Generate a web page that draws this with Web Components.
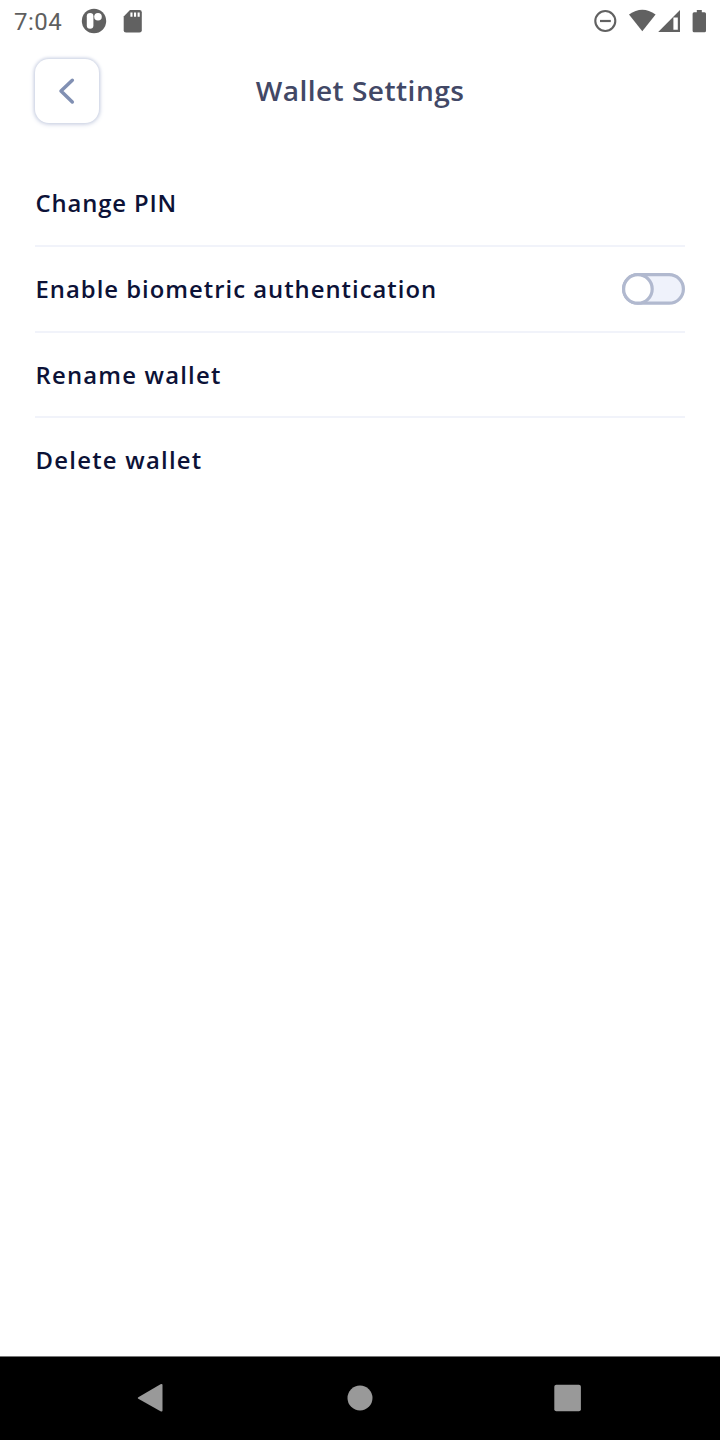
<!DOCTYPE html>
<html lang="en">
<head>
<meta charset="utf-8">
<title>Wallet Settings</title>
<style>
html, body { margin: 0; background: #fff; }
</style>
</head>
<body>
<wallet-screen>
  <status-bar slot="status">7:04</status-bar>
  <page-header slot="header">Wallet Settings</page-header>
  <setting-row style="--track:.81px">Change PIN</setting-row>
  <setting-row style="--track:.94px">Enable biometric authentication<toggle-switch slot="control"></toggle-switch></setting-row>
  <setting-row style="--track:1.13px">Rename wallet</setting-row>
  <setting-row last style="--track:1.18px">Delete wallet</setting-row>
  <nav-bar slot="nav"></nav-bar>
</wallet-screen>
<script>
const define = (name, html) => customElements.define(name, class extends HTMLElement {
  constructor() {
    super();
    this.attachShadow({ mode: 'open' }).innerHTML = html;
  }
});

define('wallet-screen', `
<style>
:host { display: flex; flex-direction: column; width: 720px; height: 1440px; background: #fff; overflow: hidden; font-family: "Open Sans", "Liberation Sans", sans-serif; }
main { flex: 1; padding: 22.3px 35px 0; }
</style>
<slot name="status"></slot><slot name="header"></slot>
<main><slot></slot></main>
<slot name="nav"></slot>`);

define('status-bar', `
<style>
:host { display: flex; height: 43px; align-items: center; color: #5f5f5f; box-sizing: border-box; padding-left: 14px; font: 400 24px/43px Roboto, sans-serif; letter-spacing: .5px; }
.time { width: 67px; white-space: nowrap; padding-top: 1px; }
.left { flex: 1; }
svg { display: block; }
</style>
<span class="time"><slot></slot></span>
<svg class="left" height="43" viewBox="81 0 510 43" preserveAspectRatio="xMinYMin" fill="#616161">
  <circle cx="94" cy="21" r="12.2"/>
  <rect x="86.8" y="13" width="6.6" height="15.8" rx="3.3" fill="#fff"/>
  <circle cx="98" cy="16.7" r="3.8" fill="#fff"/>
  <path d="M130 10h9.500q2.300 0 2.300 2.300v17.900q0 2.300-2.300 2.300h-13.500q-2.300 0-2.300-2.300v-13.700z"/>
  <path d="M130.400 12.500h2.100v4.200h-2.100zM134 12.500h2.100v4.200H134zM137.600 12.500h2.100v4.200h-2.100z" fill="#fff"/>
</svg>
<svg width="129" height="43" viewBox="591 0 129 43" fill="#616161">
  <circle cx="605.300" cy="21" r="10" fill="none" stroke="#616161" stroke-width="2.100"/>
  <path d="M600 19.900h10.800v2.200H600z"/>
  <path d="M642.300 31.300L629 14.600q13.300-9.500 26.600 0z"/>
  <path fill-rule="evenodd" d="M680 10v22h-21.800zM673.400 17.500v12.300h4.400V17.500z"/>
  <path d="M696.800 10h5v2.200h2.700q1.500 0 1.500 1.500V30.700q0 1.500-1.500 1.500h-10.400q-1.500 0-1.500-1.500v-17q0-1.500 1.500-1.500h2.700z"/>
</svg>`);

define('page-header', `
<style>
:host { display: grid; grid-template-columns: 64px 1fr 64px; align-items: center; height: 96px; padding: 0 35px; box-sizing: border-box; }
button { display: grid; place-items: center; width: 63.500px; height: 63.500px; padding: 0; border: 0; border-radius: 14px; background: #fff; box-shadow: 0 0 3px 1px #cfd5e5, 0 1px 5px 1px #dfe3ee; }
h1 { margin: 0; text-align: center; font-size: 26.500px; line-height: 34px; font-weight: 600; color: #424866; letter-spacing: .43px; white-space: nowrap; transform: scaleX(1.06); }
</style>
<button aria-label="Back"><svg width="20" height="30" viewBox="57 76 20 30" fill="none" stroke="#8190b3" stroke-width="3.500" stroke-linecap="round" stroke-linejoin="round"><path d="M72.300 80.300L61 91l11.300 11"/></svg></button>
<h1><slot></slot></h1>`);

define('setting-row', `
<style>
:host { display: flex; align-items: center; justify-content: space-between; height: 85.700px; box-sizing: border-box; border-bottom: 2px solid #f1f3fa; color: #0c1237; }
:host([last]) { border-color: transparent; }
.label { padding: 2px 0 0 .5px; font-size: 22.500px; line-height: 30px; font-weight: 600; letter-spacing: var(--track); white-space: nowrap; transform: scaleX(1.06); transform-origin: left; }
</style>
<span class="label"><slot></slot></span><slot name="control"></slot>`);

define('toggle-switch', `
<style>:host { display: block; width: 63px; height: 32px; } svg { display: block; }</style>
<svg width="63" height="32" viewBox="0 0 63 32" stroke="#b1b9cf" stroke-width="3.200">
  <rect x="1.600" y="1.600" width="59.800" height="28.600" rx="14.300" fill="#eff2fb"/>
  <circle cx="15.900" cy="15.900" r="14.300" fill="#fff"/>
</svg>`);

define('nav-bar', `
<style>
:host { display: flex; height: 84px; box-sizing: border-box; border-top: 1px solid #777; background: #000; align-items: center; padding: 0 47px 2px 46px; justify-content: space-around; }
svg { display: block; }
</style>
<svg width="28" height="30" viewBox=".700 0 28 30" fill="#999"><path d="M2 14.200L24.200 1.200q2-.9 2 .8v25.400q0 1.700-2 .8L2 15.800q-1.200-.8 0-1.600z"/></svg>
<svg width="28" height="30" viewBox="0 0 28 30" fill="#999"><circle cx="14" cy="15" r="12.500"/></svg>
<svg width="28" height="30" viewBox="0 0 28 30" fill="#999"><rect x="-.700" y="1.700" width="26.600" height="26.600" rx="2"/></svg>
<style>svg { overflow: visible; }</style>`);
</script>
</body>
</html>
